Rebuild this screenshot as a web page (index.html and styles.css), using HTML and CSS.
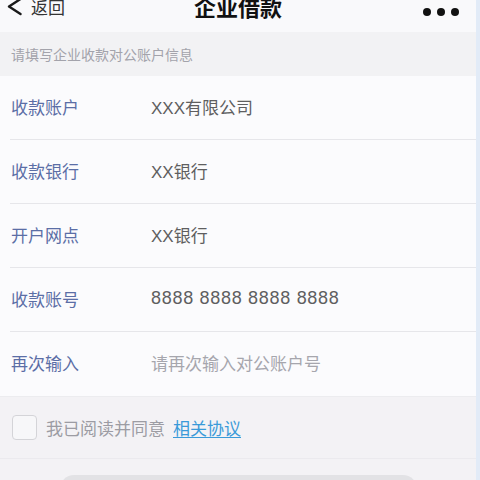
FILE: index.html
```html
<!DOCTYPE html>
<html lang="zh-CN">
<head>
<meta charset="utf-8">
<link rel="stylesheet" href="styles.css">
</head>
<body>
<div class="page">
  <header class="nav">
    <div class="back">
      <svg class="chev" width="16" height="18" viewBox="0 0 16 18"><path d="M13.5 1 L2 8.5 L13.5 16" fill="none" stroke="#1a1a1a" stroke-width="2.4" stroke-linecap="round" stroke-linejoin="round"/></svg>
      <span class="back-text">返回</span>
    </div>
    <div class="title">企业借款</div>
    <div class="more"><span class="dot"></span><span class="dot"></span><span class="dot"></span></div>
  </header>
  <div class="hint">请填写企业收款对公账户信息</div>
  <div class="form">
    <div class="row"><span class="label">收款账户</span><span class="value">XXX有限公司</span></div>
    <div class="row"><span class="label">收款银行</span><span class="value">XX银行</span></div>
    <div class="row"><span class="label">开户网点</span><span class="value">XX银行</span></div>
    <div class="row"><span class="label">收款账号</span><span class="value num">8888 8888 8888 8888</span></div>
    <div class="row last"><span class="label">再次输入</span><span class="value placeholder">请再次输入对公账户号</span></div>
  </div>
  <div class="agree">
    <span class="box"></span>
    <span class="agree-text">我已阅读并同意</span>
    <a class="link">相关协议</a>
  </div>
  <div class="footer">
    <div class="btn"></div>
  </div>
</div>
</body>
</html>
```
FILE: styles.css
```css
html, body {
  margin: 0;
  padding: 0;
  height: 480px;
  overflow: hidden;
}
body {
  font-family: "Noto Sans CJK SC", "Noto Sans", sans-serif;
  background: #f3f2f5;
}
.page {
  width: 476px;
  height: 480px;
  border-right: 4px solid #e2ebf7;
  display: flex;
  flex-direction: column;
  background: #f3f2f5;
  overflow: hidden;
}
.nav {
  height: 32px;
  background: #f9f9fb;
  display: flex;
  align-items: flex-start;
  justify-content: space-between;
  position: relative;
  flex-shrink: 0;
}
.back {
  display: flex;
  align-items: center;
  height: 16px;
  padding-left: 7px;
  margin-top: -1px;
}
.chev {
  display: block;
}
.back-text {
  font-size: 17px;
  line-height: 16px;
  color: #333;
  margin-left: 8px;
}
.title {
  position: absolute;
  left: 0;
  right: 0;
  top: -5px;
  text-align: center;
  font-size: 22px;
  line-height: 22px;
  font-weight: 700;
  color: #111;
}
.more {
  display: flex;
  gap: 6px;
  margin-top: 8px;
  margin-right: 17px;
}
.dot {
  width: 8px;
  height: 8px;
  border-radius: 50%;
  background: #111;
}
.hint {
  height: 44px;
  background: #f2f2f4;
  font-size: 14px;
  color: #a3a3ab;
  padding-left: 11px;
  display: flex;
  align-items: center;
  flex-shrink: 0;
}
.form {
  background: #fbfbfd;
  flex-shrink: 0;
}
.row {
  height: 64px;
  display: flex;
  align-items: center;
  margin-left: 10px;
  padding-bottom: 3px;
  border-bottom: 1px solid #e6e6ea;
  box-sizing: border-box;
  font-size: 17px;
}
.row.last {
  border-bottom: none;
}
.label {
  width: 140px;
  padding-left: 1px;
  color: #5b6ea6;
}
.value {
  font-family: "Liberation Sans", "Noto Sans CJK SC", sans-serif;
  color: #5e5e60;
}
.value.num {
  font-size: 18px;
  letter-spacing: 0.7px;
}
.value.placeholder {
  color: #a6a6ad;
}
.agree {
  height: 61px;
  display: flex;
  align-items: center;
  padding-left: 12px;
  border-top: 1px solid #ececef;
  border-bottom: 1px solid #ebeaee;
  flex-shrink: 0;
  font-size: 17px;
}
.box {
  width: 23px;
  height: 23px;
  border: 1px solid #d4d4d8;
  border-radius: 4px;
  background: #f7f7f9;
  margin-right: 9px;
}
.agree-text {
  color: #9c9ca3;
  margin-right: 8px;
}
.link {
  color: #3a9ad9;
  text-decoration: underline;
  text-underline-offset: 2px;
}
.footer {
  flex: 1;
  display: flex;
  justify-content: center;
  padding-top: 16px;
}
.btn {
  width: 357px;
  height: 30px;
  border-radius: 14px;
  background: #e2e2e5;
  flex-shrink: 0;
}
```
